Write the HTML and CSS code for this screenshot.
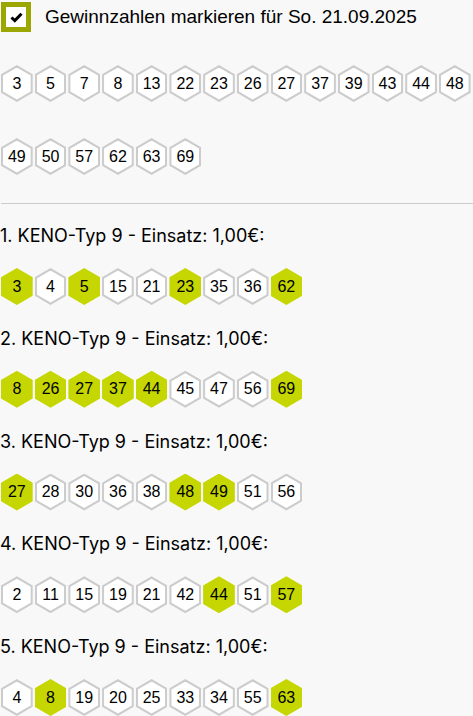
FILE: index.html
```html
<!DOCTYPE html>
<html lang="de">
<head>
<meta charset="utf-8">
<title>KENO Gewinnzahlen</title>
<link rel="stylesheet" href="styles.css">
</head>
<body>
<div class="header">
  <span class="checkbox"><svg width="13" height="11" viewBox="0 0 13 11"><path d="M1.5 5.5 L4.8 8.6 L11.5 1.8" fill="none" stroke="#000" stroke-width="3"/></svg></span>
  <span class="title">Gewinnzahlen markieren für So. 21.09.2025</span>
</div>
<div class="hexes winning">
  <span class="hex">3</span><span class="hex">5</span><span class="hex">7</span><span class="hex">8</span><span class="hex">13</span><span class="hex">22</span><span class="hex">23</span><span class="hex">26</span><span class="hex">27</span><span class="hex">37</span><span class="hex">39</span><span class="hex">43</span><span class="hex">44</span><span class="hex">48</span>
  <span class="hex">49</span><span class="hex">50</span><span class="hex">57</span><span class="hex">62</span><span class="hex">63</span><span class="hex">69</span>
</div>
<hr class="divider">
<div class="ticket">
  <div class="ticket-title">1. KENO-Typ 9 - Einsatz: 1,00€:</div>
  <div class="hexes"><span class="hex hit">3</span><span class="hex">4</span><span class="hex hit">5</span><span class="hex">15</span><span class="hex">21</span><span class="hex hit">23</span><span class="hex">35</span><span class="hex">36</span><span class="hex hit">62</span></div>
</div>
<div class="ticket">
  <div class="ticket-title">2. KENO-Typ 9 - Einsatz: 1,00€:</div>
  <div class="hexes"><span class="hex hit">8</span><span class="hex hit">26</span><span class="hex hit">27</span><span class="hex hit">37</span><span class="hex hit">44</span><span class="hex">45</span><span class="hex">47</span><span class="hex">56</span><span class="hex hit">69</span></div>
</div>
<div class="ticket">
  <div class="ticket-title">3. KENO-Typ 9 - Einsatz: 1,00€:</div>
  <div class="hexes"><span class="hex hit">27</span><span class="hex">28</span><span class="hex">30</span><span class="hex">36</span><span class="hex">38</span><span class="hex hit">48</span><span class="hex hit">49</span><span class="hex">51</span><span class="hex">56</span></div>
</div>
<div class="ticket">
  <div class="ticket-title">4. KENO-Typ 9 - Einsatz: 1,00€:</div>
  <div class="hexes"><span class="hex">2</span><span class="hex">11</span><span class="hex">15</span><span class="hex">19</span><span class="hex">21</span><span class="hex">42</span><span class="hex hit">44</span><span class="hex">51</span><span class="hex hit">57</span></div>
</div>
<div class="ticket">
  <div class="ticket-title">5. KENO-Typ 9 - Einsatz: 1,00€:</div>
  <div class="hexes"><span class="hex">4</span><span class="hex hit">8</span><span class="hex">19</span><span class="hex">20</span><span class="hex">25</span><span class="hex">33</span><span class="hex">34</span><span class="hex">55</span><span class="hex hit">63</span></div>
</div>
</body>
</html>
```
FILE: styles.css
```css
html, body {
  margin: 0;
  padding: 0;
  background: #f8f8f8;
  color: #000;
  font-family: "Liberation Sans", Arial, sans-serif;
}

.header {
  display: flex;
  align-items: center;
  gap: 14px;
  height: 32px;
  padding-left: 1px;
  padding-top: 1px;
}

.checkbox {
  box-sizing: border-box;
  width: 30px;
  height: 30px;
  border: 5px solid #9ba700;
  background: #fff;
  display: flex;
  align-items: center;
  justify-content: center;
}

.title {
  font-size: 19px;
  line-height: 22px;
}

.hexes {
  display: flex;
  flex-wrap: wrap;
  gap: 36px 2px;
  padding-left: 1px;
}

.winning {
  margin-top: 32px;
}

.hex {
  position: relative;
  width: 31.7px;
  height: 37px;
  display: flex;
  align-items: center;
  justify-content: center;
  font-size: 16px;
  clip-path: polygon(50% 0, 100% 25%, 100% 75%, 50% 100%, 0 75%, 0 25%);
  background: #cccccc;
  z-index: 0;
}

.hex::before {
  content: "";
  position: absolute;
  inset: 2.5px 2px;
  background: #fff;
  clip-path: polygon(50% 0, 100% 25%, 100% 75%, 50% 100%, 0 75%, 0 25%);
  z-index: -1;
}

.hex.hit {
  background: #c5d600;
}

.hex.hit::before {
  background: #c5d600;
}

.divider {
  border: 0;
  border-top: 1px solid #cccccc;
  margin: 28px 0 0 1px;
  height: 0;
}

.ticket {
  margin-top: 23.75px;
}

.divider + .ticket {
  margin-top: 22px;
}

.ticket-title {
  font-family: Inter, "Liberation Sans", sans-serif;
  font-size: 18px;
  line-height: 20px;
  margin-bottom: 22px;
}
```
